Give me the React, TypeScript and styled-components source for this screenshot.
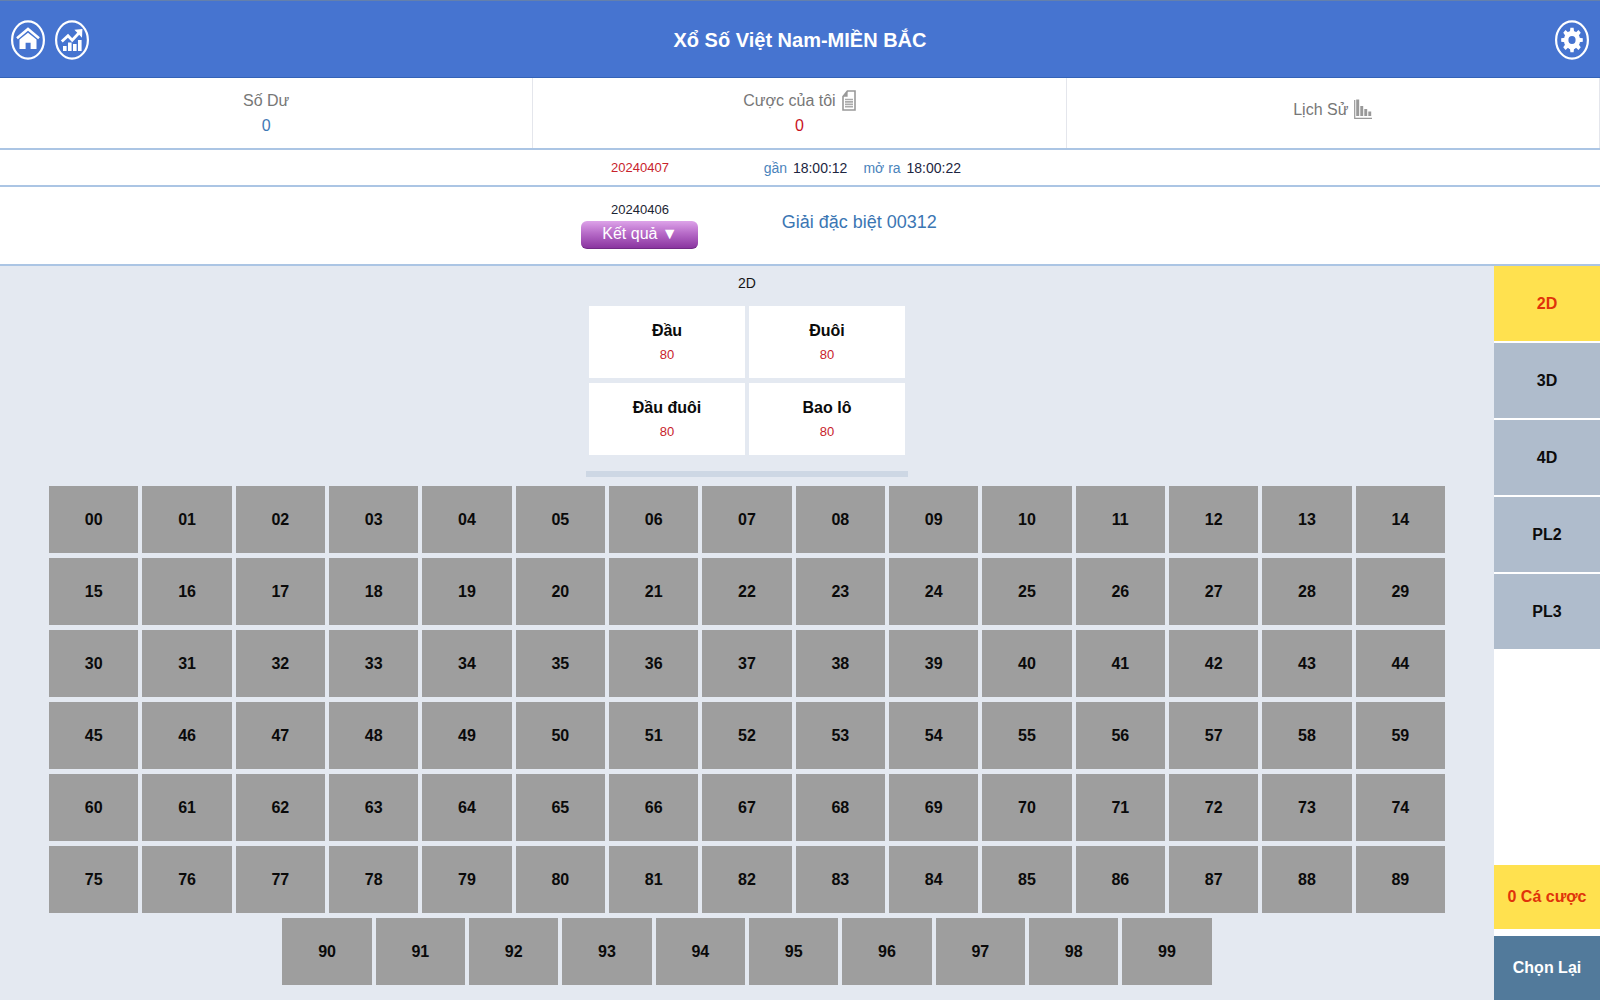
import React, { useState } from "react";
import styled, { createGlobalStyle } from "styled-components";

const GlobalStyle = createGlobalStyle`
  *, *::before, *::after { box-sizing: border-box; }
  body {
    margin: 0;
    background: #fff;
    font-family: "Liberation Sans", Arial, "DejaVu Sans", sans-serif;
  }
  button { font-family: inherit; cursor: pointer; }
`;

const Page = styled.div`
  display: flex;
  flex-direction: column;
  min-height: 100vh;
`;

const Header = styled.header`
  display: grid;
  grid-template-columns: 1fr auto 1fr;
  align-items: center;
  height: 78px;
  padding: 2px 11px 0;
  background: #4674d0;
  border-top: 1px solid #6480ac;
  border-bottom: 1px solid #3463b7;
`;

const Title = styled.h1`
  margin: 0;
  color: #fff;
  font-size: 20px;
  line-height: 26px;
  font-weight: bold;
`;

const HeaderGroup = styled.div<{ $end?: boolean }>`
  display: flex;
  gap: 10px;
  justify-content: ${(p) => (p.$end ? "flex-end" : "flex-start")};
`;

const IconButton = styled.button`
  display: block;
  width: 34px;
  height: 40px;
  padding: 0;
  border: 0;
  background: none;
  svg { display: block; }
`;

const Summary = styled.nav`
  display: grid;
  grid-template-columns: repeat(3, 1fr);
  height: 72px;
  border-bottom: 2px solid #abc5e4;
`;

const SummaryItem = styled.button<{ $raised?: boolean }>`
  display: flex;
  flex-direction: column;
  align-items: center;
  justify-content: center;
  padding: ${(p) => (p.$raised ? "0 0 8px" : "0")};
  border: 0;
  border-right: 1px solid #e4e6ec;
  background: #fff;
  color: #777;
  font-size: 16px;
  line-height: 25px;
`;

const SummaryLabel = styled.span`
  display: flex;
  align-items: center;
  gap: 6px;
  svg { display: block; }
`;

const SummaryValue = styled.span<{ $tone: string }>`
  color: ${(p) => p.$tone};
`;

const DrawRow = styled.section<{ $height: number }>`
  display: grid;
  grid-template-columns: 5fr 2fr 8fr;
  align-items: center;
  height: ${(p) => p.$height}px;
  border-bottom: 2px solid #abc5e4;
`;

const DrawIssue = styled.div<{ $tone?: string; $raised?: boolean }>`
  grid-column: 2;
  display: flex;
  flex-direction: column;
  align-items: center;
  padding-bottom: ${(p) => (p.$raised ? "4px" : "0")};
  color: ${(p) => p.$tone || "#1c2533"};
  font-size: 13px;
  line-height: 22px;
`;

const DrawTimes = styled.div`
  display: flex;
  gap: 16px;
  padding-left: 17px;
  color: #1c2540;
  font-size: 14px;
  line-height: 22px;
`;

const TimeLabel = styled.span`
  margin-right: 2px;
  color: #4a83bb;
`;

const ResultButton = styled.button`
  width: 117px;
  height: 28px;
  padding: 0;
  border: 0;
  border-bottom: 1px solid #722a86;
  border-radius: 6px;
  background: linear-gradient(#dda3e9, #b76bc8 45%, #8a35a0);
  color: #fff;
  font-size: 16px;
  line-height: 26px;
`;

const SpecialPrize = styled.div`
  padding: 0 0 8px 35px;
  color: #3b76b3;
  font-size: 18px;
  line-height: 24px;
`;

const Body = styled.div`
  display: flex;
  flex: 1;
`;

const Board = styled.main`
  flex: 1;
  min-width: 0;
  padding: 4px 49px 12px;
  background: #e4e9f1;
`;

const BoardTitle = styled.h2`
  margin: 0 0 10px;
  color: #151515;
  font-size: 14px;
  line-height: 26px;
  font-weight: normal;
  text-align: center;
`;

const PlayGrid = styled.div`
  display: grid;
  grid-template-columns: repeat(2, 156px);
  justify-content: center;
  gap: 5px 4px;
`;

const PlayCard = styled.button`
  height: 72px;
  padding: 2px 0 0;
  border: 0;
  background: #fff;
`;

const PlayName = styled.span`
  display: block;
  color: #0a0a0a;
  font-size: 16px;
  line-height: 24px;
  font-weight: bold;
`;

const PlayOdds = styled.span`
  display: block;
  color: #c8232c;
  font-size: 13px;
  line-height: 24px;
`;

const Divider = styled.hr`
  width: 322px;
  height: 6px;
  margin: 16px auto 9px;
  border: 0;
  background: #cdd7e4;
`;

const NumberRows = styled.div`
  display: flex;
  flex-direction: column;
  gap: 5px;
`;

const NumberRow = styled.div`
  display: flex;
  justify-content: center;
  gap: 4px;
`;

const NumberCell = styled.button<{ $picked: boolean }>`
  flex: 0 0 calc((100% - 56px) / 15);
  height: 67px;
  padding: 0;
  border: 0;
  background: ${(p) => (p.$picked ? "#ffe14f" : "#9e9e9e")};
  color: #0a0a0a;
  font-size: 16px;
  font-weight: bold;
`;

const Sidebar = styled.aside`
  display: flex;
  flex-direction: column;
  gap: 2px;
  width: 106px;
  background: #fff;
`;

const SideTab = styled.button<{ $active: boolean }>`
  height: 75px;
  padding: 0;
  border: 0;
  background: ${(p) => (p.$active ? "#ffe14f" : "#afbccc")};
  color: ${(p) => (p.$active ? "#e0330a" : "#0c0c0c")};
  font-size: 16px;
  font-weight: bold;
`;

const SideActions = styled.div`
  display: flex;
  flex-direction: column;
  gap: 7px;
  margin-top: auto;
`;

const ActionButton = styled.button<{ $primary?: boolean }>`
  height: 64px;
  padding: 0;
  border: 0;
  background: ${(p) => (p.$primary ? "#ffe14f" : "#527a9b")};
  color: ${(p) => (p.$primary ? "#e0330a" : "#fff")};
  font-size: 16px;
  font-weight: bold;
`;

const Ring = ({ children }: { children: React.ReactNode }) => (
  <svg width="34" height="40" viewBox="0 0 34 40" aria-hidden="true">
    <ellipse cx="17" cy="20" rx="15.9" ry="18.6" fill="none" stroke="#fff" strokeWidth="2.2" />
    {children}
  </svg>
);

const HomeIcon = () => (
  <Ring>
    <path d="M6 18.2 17 9l11 9.2" fill="none" stroke="#fff" strokeWidth="2.6" />
    <path d="M8.5 19.6 17 12.8l8.5 6.8V29H19.6v-6.2h-5V29H8.5z" fill="#fff" />
  </Ring>
);

const TrendIcon = () => (
  <Ring>
    <path d="M8 26h3.6v5H8zM13 22.6h3.6V31H13zM18 24h3.6v7H18zM23 20h3.6v11H23z" fill="#fff" />
    <path d="M6.8 21.6 13 15.8l4.2 4.4 7.4-8" fill="none" stroke="#fff" strokeWidth="2.8" />
    <path d="M19.4 9.8 27.4 9 27 17.8z" fill="#fff" />
  </Ring>
);

const teeth = [0, 45, 90, 135, 180, 225, 270, 315];

const GearIcon = () => (
  <Ring>
    <g transform="translate(17 20) scale(1 1.13)">
      {teeth.map((angle) => (
        <path key={angle} d="M-2.1 -7 L-1.6 -10.8 H1.6 L2.1 -7 z" fill="#fff" transform={`rotate(${angle})`} />
      ))}
      <circle r="5.9" fill="none" stroke="#fff" strokeWidth="4.6" />
    </g>
  </Ring>
);

const DocumentIcon = () => (
  <svg width="14" height="21" viewBox="0 0 14 21" aria-hidden="true">
    <path d="M5.4 1H13v19H1V6.6z" fill="#fff" stroke="#999" strokeWidth="1.6" />
    <path d="M5.6 1v5.8H1z" fill="#999" />
    <path d="M3 9.5h8M3 11.9h8M3 14.3h8M3 16.6h8" stroke="#aaa" strokeWidth="1.6" />
  </svg>
);

const HistoryIcon = () => (
  <svg width="18" height="20" viewBox="0 0 18 20" aria-hidden="true">
    <path d="M.7 1v18.3H18" fill="none" stroke="#999" strokeWidth="1.2" />
    <path d="M2.2 .5h3V17h-3zM6.3 7h2.9v10H6.3zM10.3 10h2.9v7h-2.9zM14.3 12.6h2.9V17h-2.9z" fill="#999" />
  </svg>
);

const plays = ["Đầu", "Đuôi", "Đầu đuôi", "Bao lô"];
const tabs = ["2D", "3D", "4D", "PL2", "PL3"];
const numbers = Array.from({ length: 100 }, (_, i) => String(i).padStart(2, "0"));
const rows = Array.from({ length: 7 }, (_, r) => numbers.slice(r * 15, r * 15 + 15));

export default function App() {
  const [tab, setTab] = useState("2D");
  const [picked, setPicked] = useState<string[]>([]);

  const toggle = (n: string) =>
    setPicked((list) => (list.includes(n) ? list.filter((x) => x !== n) : [...list, n]));

  return (
    <Page>
      <GlobalStyle />
      <Header>
        <HeaderGroup>
          <IconButton type="button" aria-label="Trang chủ"><HomeIcon /></IconButton>
          <IconButton type="button" aria-label="Xu hướng"><TrendIcon /></IconButton>
        </HeaderGroup>
        <Title>Xổ Số Việt Nam-MIỀN BẮC</Title>
        <HeaderGroup $end>
          <IconButton type="button" aria-label="Cài đặt"><GearIcon /></IconButton>
        </HeaderGroup>
      </Header>

      <Summary>
        <SummaryItem type="button">
          <SummaryLabel>Số Dư</SummaryLabel>
          <SummaryValue $tone="#3f78b5">0</SummaryValue>
        </SummaryItem>
        <SummaryItem type="button">
          <SummaryLabel>Cược của tôi <DocumentIcon /></SummaryLabel>
          <SummaryValue $tone="#c8141e">0</SummaryValue>
        </SummaryItem>
        <SummaryItem type="button" $raised>
          <SummaryLabel>Lịch Sử <HistoryIcon /></SummaryLabel>
        </SummaryItem>
      </Summary>

      <DrawRow $height={37}>
        <DrawIssue $tone="#c8232c">20240407</DrawIssue>
        <DrawTimes>
          <span><TimeLabel>gần</TimeLabel> 18:00:12</span>
          <span><TimeLabel>mở ra</TimeLabel> 18:00:22</span>
        </DrawTimes>
      </DrawRow>

      <DrawRow $height={79}>
        <DrawIssue $raised>
          20240406
          <ResultButton type="button">Kết quả ▼</ResultButton>
        </DrawIssue>
        <SpecialPrize>Giải đặc biệt 00312</SpecialPrize>
      </DrawRow>

      <Body>
        <Board>
          <BoardTitle>{tab}</BoardTitle>
          <PlayGrid>
            {plays.map((name) => (
              <PlayCard type="button" key={name}>
                <PlayName>{name}</PlayName>
                <PlayOdds>80</PlayOdds>
              </PlayCard>
            ))}
          </PlayGrid>
          <Divider />
          <NumberRows>
            {rows.map((row) => (
              <NumberRow key={row[0]}>
                {row.map((n) => (
                  <NumberCell type="button" key={n} $picked={picked.includes(n)} onClick={() => toggle(n)}>
                    {n}
                  </NumberCell>
                ))}
              </NumberRow>
            ))}
          </NumberRows>
        </Board>
        <Sidebar>
          {tabs.map((name) => (
            <SideTab type="button" key={name} $active={name === tab} onClick={() => setTab(name)}>
              {name}
            </SideTab>
          ))}
          <SideActions>
            <ActionButton type="button" $primary>{picked.length} Cá cược</ActionButton>
            <ActionButton type="button" onClick={() => setPicked([])}>Chọn Lại</ActionButton>
          </SideActions>
        </Sidebar>
      </Body>
    </Page>
  );
}
